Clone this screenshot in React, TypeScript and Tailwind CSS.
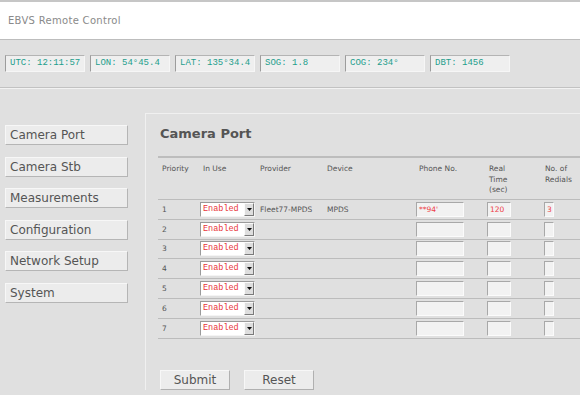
import React from "react";

const status = ["UTC: 12:11:57", "LON: 54°45.4", "LAT: 135°34.4", "SOG: 1.8", "COG: 234°", "DBT: 1456"];
const navItems = ["Camera Port", "Camera Stb", "Measurements", "Configuration", "Network Setup", "System"];

const rows = [
  { n: "1", provider: "Fleet77-MPDS", device: "MPDS", phone: "**94'", time: "120", redials: "3" },
  { n: "2" },
  { n: "3" },
  { n: "4" },
  { n: "5" },
  { n: "6" },
  { n: "7" },
];

const cols = "grid grid-cols-[42px_58px_67px_91px_71px_55px_60px]";

function Select() {
  return (
    <div className="flex h-[15px] w-[55px] border border-t-[#9a9a9a] border-l-[#9a9a9a] border-r-[#f4f4f4] border-b-[#f4f4f4] bg-white">
      <span className="flex-1 pl-[2px] text-[8.5px] leading-[13px] text-[#e8343a] font-['Liberation_Mono',monospace]">
        Enabled
      </span>
      <span className="flex w-[10px] items-center justify-center border border-t-[#fafafa] border-l-[#fafafa] border-r-[#7a7a7a] border-b-[#7a7a7a] bg-[#dedede]">
        <svg width="5" height="3" viewBox="0 0 5 3">
          <path d="M0 0h5L2.5 3z" fill="#111" />
        </svg>
      </span>
    </div>
  );
}

function Field({ w, value }: { w: string; value?: string }) {
  return (
    <div
      className={`h-[15px] ${w} border border-t-[#a8a8a8] border-l-[#a8a8a8] border-r-[#fbfbfb] border-b-[#fbfbfb] bg-[#f2f2f2] pl-[2px] text-[7.5px] leading-[13px] text-[#ee4048]`}
    >
      {value}
    </div>
  );
}

export default function App() {
  return (
    <div className="w-[580px] h-[395px] overflow-hidden bg-[#e0e0e0] text-[#555] font-['DejaVu_Sans',sans-serif]">
      {/* header */}
      <div className="h-[40px] border-t-2 border-[#c6c6c6] bg-white border-b border-b-[#bdbdbd] pl-[8px] flex items-center">
        <span className="text-[10px] tracking-[0.3px] text-[#8a8a8a]">EBVS Remote Control</span>
      </div>

      {/* status bar */}
      <div className="h-[48px] border-b border-[#c2c2c2] pl-[5px] pt-[15px] flex gap-[5px]">
        {status.map((s) => (
          <div
            key={s}
            className="w-[80px] h-[17px] border border-t-[#b4b4b4] border-l-[#9c9c9c] border-r-[#f6f6f6] border-b-[#f6f6f6] bg-[#efefef] pl-[4px] text-[9px] leading-[15px] text-[#1d9e8c] font-['Liberation_Mono',monospace]"
          >
            {s}
          </div>
        ))}
      </div>
      <div className="h-px bg-[#f2f2f2]" />

      <div className="flex">
        {/* nav */}
        <div className="w-[145px] shrink-0 pl-[5px] pt-[36px] flex flex-col gap-[11.6px]">
          {navItems.map((n) => (
            <div
              key={n}
              className="w-[123px] h-[20px] border border-t-[#f7f7f7] border-l-[#f7f7f7] border-r-[#b5b5b5] border-b-[#b5b5b5] bg-[#ececec] pl-[4px] text-[12px] leading-[18px] text-[#555]"
            >
              {n}
            </div>
          ))}
        </div>

        {/* main panel */}
        <div className="mt-[24px] flex-1 border-l border-t border-[#f0f0f0] pl-[12px] pt-[12px]">
          <h1 className="pl-[2px] text-[13px] font-bold leading-[16px] text-[#555]">Camera Port</h1>

          <div className="mt-[14px] w-[440px] border-t-2 border-[#bdbdbd] text-[7.5px] text-[#555]">
            <div className={`${cols} h-[42px] border-b border-[#bcbcbc] pt-[6px] leading-[10.5px]`}>
              <div className="pl-[4px]">Priority</div>
              <div className="pl-[3px]">In Use</div>
              <div className="pl-[2px]">Provider</div>
              <div className="pl-[2px]">Device</div>
              <div className="pl-[3px]">Phone No.</div>
              <div className="pl-[2px]">
                Real
                <br />
                Time
                <br />
                (sec)
              </div>
              <div className="pl-[3px]">
                No. of
                <br />
                Redials
              </div>
            </div>

            {rows.map((r) => (
              <div key={r.n} className={`${cols} h-[19.8px] items-center border-b border-[#bcbcbc]`}>
                <div className="pl-[4px]">{r.n}</div>
                <div>
                  <Select />
                </div>
                <div className="pl-[2px]">{r.provider}</div>
                <div className="pl-[2px]">{r.device}</div>
                <div>
                  <Field w="w-[48px]" value={r.phone} />
                </div>
                <div>
                  <Field w="w-[24px]" value={r.time} />
                </div>
                <div className="pl-[2px]">
                  <Field w="w-[10px]" value={r.redials} />
                </div>
              </div>
            ))}
          </div>

          <div className="mt-[31px] flex gap-[14px] pl-[2px]">
            <div className="w-[70px] h-[20px] border border-t-[#f7f7f7] border-l-[#f7f7f7] border-r-[#b0b0b0] border-b-[#b0b0b0] bg-[#ececec] text-center text-[12px] leading-[18px]">
              Submit
            </div>
            <div className="w-[70px] h-[20px] border border-t-[#f7f7f7] border-l-[#f7f7f7] border-r-[#b0b0b0] border-b-[#b0b0b0] bg-[#ececec] text-center text-[12px] leading-[18px]">
              Reset
            </div>
          </div>
        </div>
      </div>
    </div>
  );
}
